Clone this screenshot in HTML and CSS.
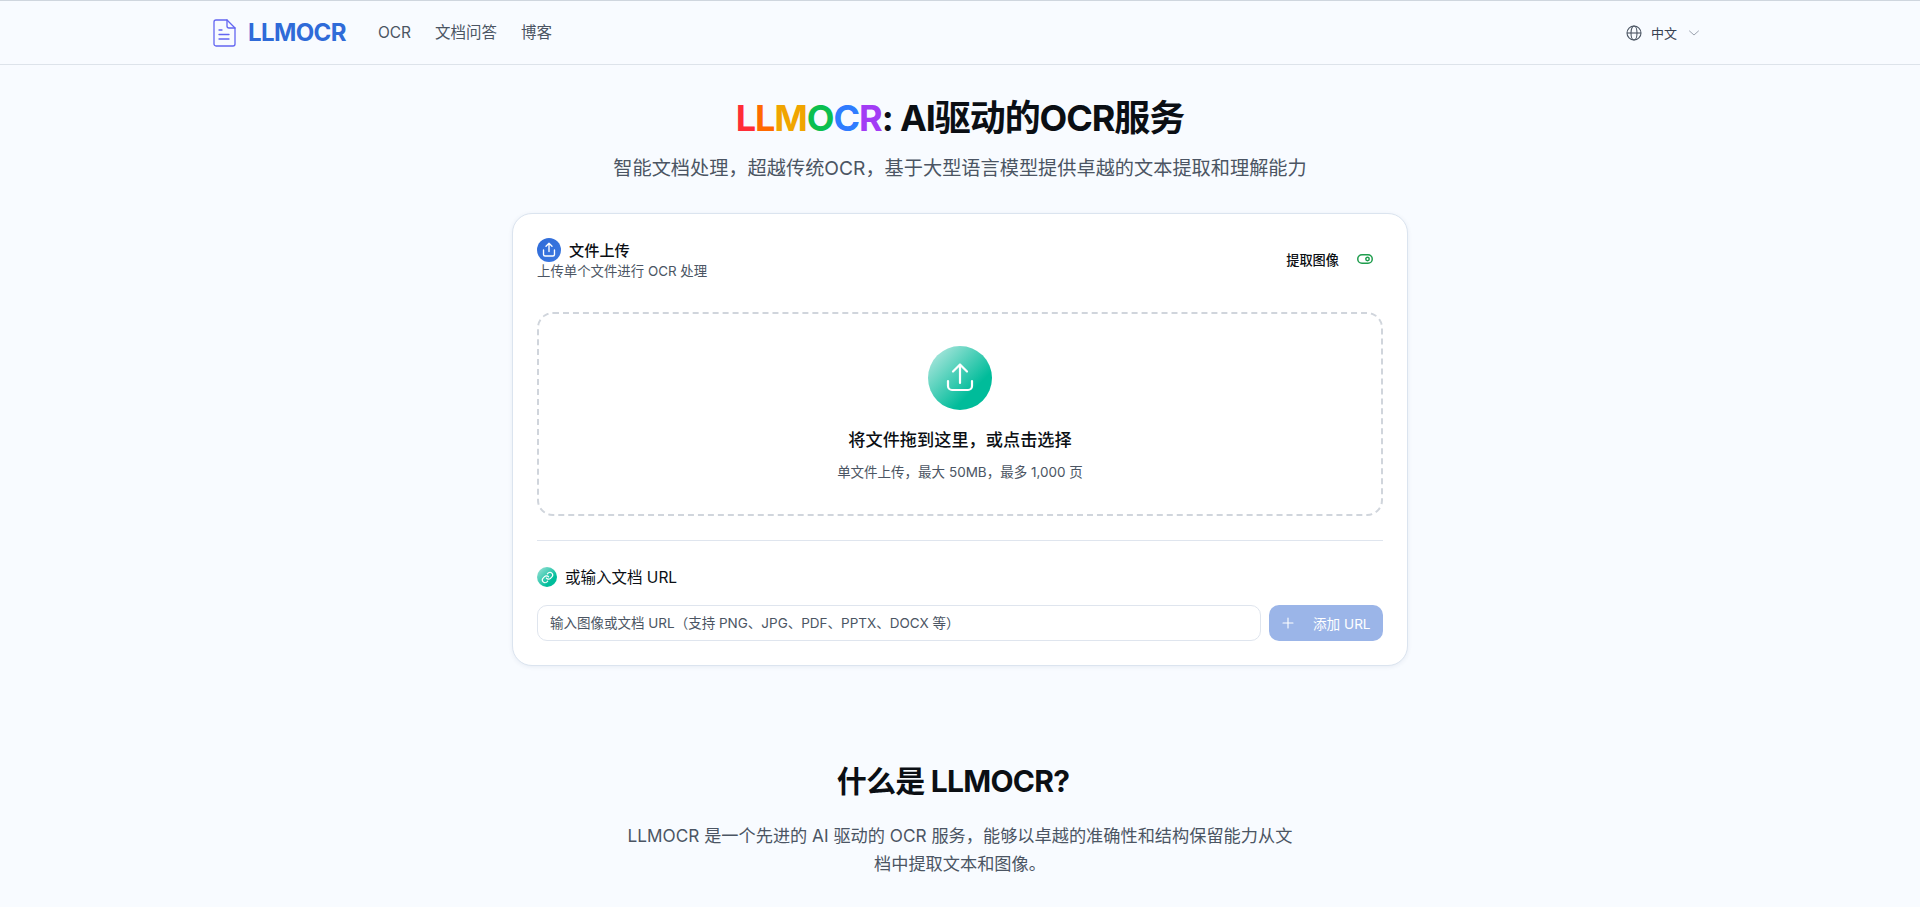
FILE: index.html
```html
<!DOCTYPE html>
<html lang="zh">
<head>
<meta charset="utf-8">
<title>LLMOCR</title>
<link rel="stylesheet" href="styles.css">
</head>
<body>
<header class="topbar">
  <div class="topbar-inner">
    <div class="topbar-left">
      <a class="brand">
        <svg class="brand-icon" viewBox="0 0 24 28" fill="none" stroke="#6366f1" stroke-width="1.3" stroke-linecap="round" stroke-linejoin="round"><path d="M4 1h11l8 8v16a2 2 0 0 1-2 2H4a2 2 0 0 1-2-2V3a2 2 0 0 1 2-2z"/><path d="M15 1v6a2 2 0 0 0 2 2h6"/><path d="M7 11h3M7 15.500h10M7 20h10"/></svg>
        <span class="brand-name">LLMOCR</span>
      </a>
      <nav class="nav"><a>OCR</a><a>文档问答</a><a>博客</a></nav>
    </div>
    <div class="lang">
      <svg class="globe" viewBox="0 0 16 16" fill="none" stroke="#4b5563" stroke-width="1.100"><circle cx="8" cy="8" r="7"/><ellipse cx="8" cy="8" rx="3" ry="7"/><path d="M1 8h14"/></svg>
      <span>中文</span>
      <svg class="chev" viewBox="0 0 12 12" fill="none" stroke="#9ca3af" stroke-width="1" stroke-linecap="round" stroke-linejoin="round"><path d="M1.500 4l4.500 4 4.500-4"/></svg>
    </div>
  </div>
</header>
<main>
  <section class="hero">
    <h1><span class="c1">L</span><span class="c2">L</span><span class="c3">M</span><span class="c4">O</span><span class="c5">C</span><span class="c6">R</span>: AI驱动的OCR服务</h1>
    <p class="hero-sub">智能文档处理，超越传统OCR，基于大型语言模型提供卓越的文本提取和理解能力</p>
  </section>
  <section class="card">
    <div class="card-head">
      <div>
        <div class="title-row">
          <span class="badge">
            <svg viewBox="0 0 24 24" fill="none" stroke="#fff" stroke-width="1.800" stroke-linecap="round" stroke-linejoin="round"><path d="M12 14V3M8 7l4-4 4 4"/><path d="M4.700 12v6a2 2 0 0 0 2 2h10.600a2 2 0 0 0 2-2v-6"/></svg>
          </span>
          <h2 class="card-title">文件上传</h2>
        </div>
        <p class="card-sub">上传单个文件进行 OCR 处理</p>
      </div>
      <div class="extract">
        <span>提取图像</span>
        <svg class="toggle" viewBox="0 0 16 10" fill="none" stroke="#1f9d4d" stroke-width="1.500"><rect x=".75" y=".75" width="14.500" height="8.500" rx="4.250"/><circle cx="10.500" cy="5" r="1.700"/></svg>
      </div>
    </div>
    <div class="drop">
      <span class="drop-icon">
        <svg viewBox="0 0 32 32" fill="none" stroke="#fff" stroke-width="2.200" stroke-linecap="round" stroke-linejoin="round"><path d="M16 21V2.500M9 9.500l7-7 7 7"/><path d="M4 19v5a4 4 0 0 0 4 4h16a4 4 0 0 0 4-4v-5"/></svg>
      </span>
      <p class="drop-title">将文件拖到这里，或点击选择</p>
      <p class="drop-sub">单文件上传，最大 50MB，最多 1,000 页</p>
    </div>
    <hr class="divider">
    <div class="url-head">
      <span class="link-badge">
        <svg viewBox="0 0 24 24" fill="none" stroke="#fff" stroke-width="2.200" stroke-linecap="round" stroke-linejoin="round"><path d="M10 13a5 5 0 0 0 7.500.5l3-3a5 5 0 0 0-7-7l-1.700 1.700"/><path d="M14 11a5 5 0 0 0-7.500-.5l-3 3a5 5 0 0 0 7 7l1.700-1.700"/></svg>
      </span>
      <span class="url-label">或输入文档 URL</span>
    </div>
    <div class="url-row">
      <div class="url-input">输入图像或文档 URL（支持 PNG、JPG、PDF、PPTX、DOCX 等）</div>
      <div class="url-btn">
        <svg viewBox="0 0 12 12" fill="none" stroke="#fff" stroke-width="1.100" stroke-linecap="round"><path d="M6 1v10M1 6h10"/></svg>
        <span>添加 URL</span>
      </div>
    </div>
  </section>
  <section class="about">
    <h2>什么是 LLMOCR?</h2>
    <p>LLMOCR 是一个先进的 AI 驱动的 OCR 服务，能够以卓越的准确性和结构保留能力从文档中提取文本和图像。</p>
  </section>
</main>
</body>
</html>
```
FILE: styles.css
```css
* { box-sizing: border-box; margin: 0; padding: 0; }
html, body { height: 907px; overflow: hidden; }
body {
  background: #f8fbff;
  color: #0b0f14;
  font-family: Inter, "Noto Sans CJK SC", sans-serif;
}
.topbar {
  height: 65px;
  border-top: 1px solid #cfd6de;
  border-bottom: 1px solid #dde3ea;
}
.topbar-inner {
  max-width: 1536px;
  height: 100%;
  margin: 0 auto;
  padding: 0 27px 0 20px;
  display: flex;
  align-items: center;
  justify-content: space-between;
}
.topbar-left { display: flex; align-items: center; gap: 32px; }
.brand { display: flex; align-items: center; gap: 12px; }
.brand-icon { width: 24px; height: 28px; }
.brand-name { font-size: 24px; font-weight: 700; color: #2f6bd8; letter-spacing: -.025em; line-height: 32px; }
.nav { display: flex; align-items: baseline; gap: 24px; font-size: 15.500px; line-height: 22px; color: #4b5563; }
.lang { display: flex; align-items: center; font-size: 13px; line-height: 20px; color: #374151; }
.globe { width: 16px; height: 16px; margin-right: 9px; }
.chev { width: 12px; height: 12px; margin-left: 11px; margin-right: 1px; }
.hero { text-align: center; padding-top: 31px; }
.hero h1 { font-size: 36px; line-height: 44px; font-weight: 700; letter-spacing: -.03em; }
.c1 { color: #ff2d37; } .c2 { color: #ff6a00; } .c3 { color: #f0a500; }
.c4 { color: #0bbf4f; } .c5 { color: #2f7cff; } .c6 { color: #a23cf5; }
.hero-sub { font-size: 19.2px; line-height: 28px; color: #4b5563; margin-top: 14px; }
.card {
  width: 896px;
  margin: 31px auto 0;
  padding: 24px;
  background: #fff;
  border: 1px solid #dbe4ef;
  border-radius: 20px;
  box-shadow: 0 1px 4px rgba(40, 70, 120, .08);
}
.card-head { display: flex; justify-content: space-between; align-items: center; }
.title-row { display: flex; align-items: center; gap: 8px; }
.badge {
  width: 24px; height: 24px; border-radius: 50%;
  background: linear-gradient(135deg, #2f6bd8, #3b78e0);
  display: flex; align-items: center; justify-content: center;
}
.badge svg { width: 18px; height: 18px; }
.card-title { font-size: 15.2px; font-weight: 500; line-height: 23px; padding-top: 1px; }
.card-sub { font-size: 13.4px; line-height: 18px; color: #4b5563; }
.extract { display: flex; align-items: center; gap: 18px; font-size: 13.200px; font-weight: 500; margin-right: 10px; }
.toggle { width: 16px; height: 10px; }
.drop {
  margin-top: 32px;
  height: 204px;
  border: 2px dashed #d0d5dc;
  border-radius: 16px;
  display: flex; flex-direction: column; align-items: center;
  padding-top: 32px;
}
.drop-icon {
  width: 64px; height: 64px; border-radius: 50%;
  background: linear-gradient(135deg, #c2ece6, #00bc9a 70%);
  display: flex; align-items: center; justify-content: center;
}
.drop-icon svg { width: 32px; height: 32px; }
.drop-title { font-size: 17.2px; font-weight: 500; line-height: 24px; margin-top: 18px; }
.drop-sub { font-size: 13.5px; line-height: 20px; color: #4b5563; margin-top: 10px; }
.divider { border: 0; border-top: 1px solid #dfe5ee; margin-top: 24px; }
.url-head { display: flex; align-items: center; gap: 8px; margin-top: 24px; font-size: 15.5px; font-weight: 400; line-height: 24px; }
.url-label { line-height: 23px; padding-top: 1px; }
.link-badge {
  width: 20px; height: 20px; border-radius: 50%;
  background: linear-gradient(135deg, #a6e4da, #00bd9b 70%);
  display: flex; align-items: center; justify-content: center;
}
.link-badge svg { width: 13px; height: 13px; }
.url-row { display: flex; gap: 8px; margin-top: 16px; }
.url-input {
  flex: 1; height: 36px; padding: 0 12px;
  border: 1px solid #dfe5ee; border-radius: 10px;
  font-size: 13.5px; line-height: 34px; color: #4b5563;
}
.url-btn {
  width: 114px; height: 36px; border-radius: 10px;
  background: #9bb5e8; color: #fff; font-size: 13.6px; white-space: nowrap;
  display: flex; align-items: center; padding: 0 13px; gap: 19px;
}
.url-btn svg { width: 12px; height: 12px; flex: none; }
.about { text-align: center; padding-top: 97px; }
.about h2 { font-size: 30px; line-height: 36px; font-weight: 700; letter-spacing: -.025em; padding-right: 14px; }
.about p { width: 672px; margin: 23px auto 0; font-size: 17.2px; line-height: 28px; color: #4b5563; }
```
